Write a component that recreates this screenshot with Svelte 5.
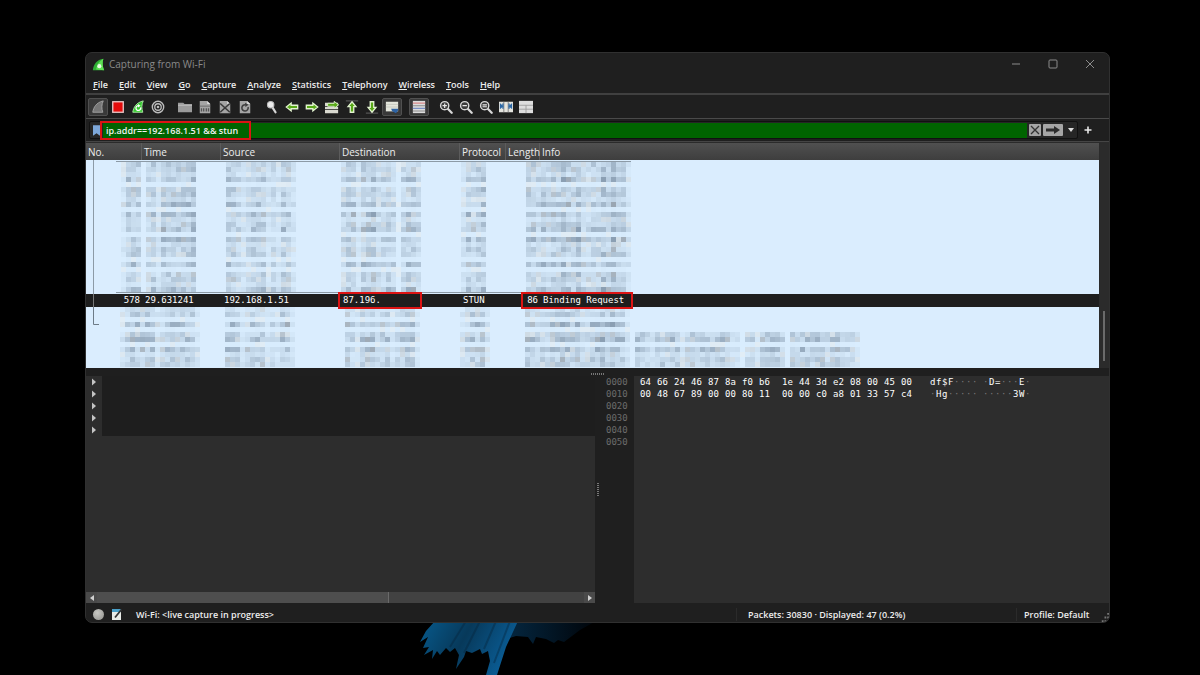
<script lang="ts">
  type Block = { x: number; mask: string };

  const menus = ['File', 'Edit', 'View', 'Go', 'Capture', 'Analyze', 'Statistics', 'Telephony', 'Wireless', 'Tools', 'Help'];

  const toolGroups = [
    ['start', 'stop', 'restart', 'options'],
    ['open', 'save', 'close', 'reload'],
    ['find', 'back', 'forward', 'goto', 'first', 'last', 'autoscroll'],
    ['colorize'],
    ['zoomin', 'zoomout', 'zoomreset', 'resize', 'layout']
  ];
  const pressed = ['start', 'autoscroll', 'colorize'];

  const columns = ['No.', 'Time', 'Source', 'Destination', 'Protocol', 'Length', 'Info'];

  const offsets = ['0000', '0010', '0020', '0030', '0040', '0050'];
  const hexRows = [
    { bytes: ['64 66 24 46 87 8a f0 b6', '1e 44 3d e2 08 00 45 00'], ascii: ['df$F····', '·D=···E·'] },
    { bytes: ['00 48 67 89 00 00 80 11', '00 00 c0 a8 01 33 57 c4'], ascii: ['·Hg·····', '·····3W·'] }
  ];

  // hidden packets: one digit per 5px tile, the mask runs along x and the rows along y
  const upperRows = '22130221303123031220302213';
  const lowerRows = '120302303122';
  const upperBlocks: Block[] = [
    { x: 35, mask: '1333' },
    { x: 60, mask: '2313333334' },
    { x: 140, mask: '33212333121331' },
    { x: 255, mask: '2331334223202332' },
    { x: 375, mask: '13234' },
    { x: 440, mask: '332323343342233434331' }
  ];
  const lowerBlocks: Block[] = [
    { x: 34, mask: '12333' },
    { x: 59, mask: '33123333331' },
    { x: 139, mask: '33312333121331' },
    { x: 259, mask: '321333233123331' },
    { x: 374, mask: '123331' },
    { x: 439, mask: '332323343342233434331' }
  ];
  const longBlocks: Block[] = [{ x: 549, mask: '332133233133333333311022133332033333332332221' }];

  function noise(a: number, b: number): number {
    const n = Math.sin(a * 12.9898 + b * 78.233) * 43758.5453;
    return n - Math.floor(n);
  }

  function tiles(blocks: Block[], rows: string, top = 0) {
    const out: { x: number; y: number; fill: string }[] = [];
    for (const block of blocks) {
      [...rows].forEach((row, r) => {
        [...block.mask].forEach((cell, c) => {
          const n = noise(block.x / 5 + c, r + top);
          const t = Math.min(0.85, (Number(cell) / 4) * (0.04 + Number(row) / 3.6) * (0.25 + n * 0.85));
          const warm = noise(c + 3, r + block.x) > 0.85 ? 8 : 0;
          const red = Math.round(217 - t * 92 + warm);
          const green = Math.round(237 - t * 92);
          const blue = Math.round(254 - t * 88 - warm);
          out.push({ x: block.x + c * 5, y: top + r * 5, fill: `rgb(${red}, ${green}, ${blue})` });
        });
      });
    }
    return out;
  }

  const upperTiles = tiles(upperBlocks, upperRows);
  const lowerTiles = [...tiles(lowerBlocks, lowerRows), ...tiles(longBlocks, '2303122', 25)];

  let filter = $state('ip.addr==192.168.1.51 && stun');
</script>

{#snippet fin(color: string, edge: string)}
  <path d="M2 14 C3 8 6 3 14 1 C12 5 12 10 13.500 14 Z" fill={color} stroke={edge} stroke-width="1" />
{/snippet}

{#snippet lens(sign: string)}
  <path d="M9.500 9.500 L14.500 14.500" stroke="#d8d8d8" stroke-width="2.600" stroke-linecap="round" />
  <circle cx="6.500" cy="6.500" r="4.700" fill="#3c3c3c" stroke="#d8d8d8" stroke-width="1.600" />
  <path d={sign} stroke="#e8e8e8" stroke-width="1.400" />
{/snippet}

{#snippet page()}
  <path d="M2 1 H10.500 L14 4.500 V15 H2 Z" fill="#a5a5a5" />
  <path d="M10.500 1 V4.500 H14 Z" fill="#dedede" />
{/snippet}

{#snippet icon(name: string)}
  <svg class="icon" viewBox="0 0 16 16" fill="none" aria-hidden="true">
    {#if name === 'start'}
      {@render fin('#777', '#a8a8a8')}
    {:else if name === 'stop'}
      <rect x="2" y="2" width="12" height="12" fill="#e30b0b" stroke="#e9c9c9" stroke-width="1.500" />
    {:else if name === 'restart'}
      {@render fin('#35c82f', '#b4f0ac')}
      <path d="M11 8.500 A2.700 2.700 0 1 1 8.500 6.500" stroke="#fff" stroke-width="1.500" />
      <path d="M8 4.500 L11 6.500 L8 8.500 Z" fill="#fff" />
    {:else if name === 'options'}
      <circle cx="8" cy="8" r="6.500" stroke="#bcbcbc" stroke-width="1.600" />
      <circle cx="8" cy="8" r="3.700" stroke="#bcbcbc" stroke-width="1.500" />
      <circle cx="8" cy="8" r="1.500" fill="#bcbcbc" />
    {:else if name === 'open'}
      <path d="M0 3 H6 L7.500 4.500 H16 V14 H0 Z" fill="#9b9b9b" />
      <path d="M0 6 H16" stroke="#c2c2c2" />
    {:else if name === 'save'}
      {@render page()}
      <path d="M2 7 H14" stroke="#666" />
      <path d="M4 9.500 V13 M6.500 9.500 V13 M9.500 9.500 V13 M12 9.500 V13" stroke="#555" stroke-width="1.500" />
    {:else if name === 'close'}
      {@render page()}
      <path d="M2.500 4 L13.500 14 M13.500 4 L2.500 14" stroke="#3a3a3a" stroke-width="1.800" />
    {:else if name === 'reload'}
      {@render page()}
      <path d="M11.500 8 A3.600 3.600 0 1 1 9 5.500" stroke="#3f3f3f" stroke-width="1.800" />
      <path d="M8 3 L12 5.500 L8.500 8 Z" fill="#3f3f3f" />
    {:else if name === 'find'}
      <path d="M8.500 8.500 L12 14" stroke="#d5d5d5" stroke-width="2.600" stroke-linecap="round" />
      <circle cx="6.500" cy="5.500" r="3.700" fill="#ececec" stroke="#bbb" stroke-width="1.200" />
    {:else if name === 'back'}
      <path d="M1.500 8 L7 3.500 V6 H14.500 V10 H7 V12.500 Z" fill="#58a817" stroke="#e2f3cf" stroke-width="1.500" />
    {:else if name === 'forward'}
      <path d="M14.500 8 L9 3.500 V6 H1.500 V10 H9 V12.500 Z" fill="#58a817" stroke="#e2f3cf" stroke-width="1.500" />
    {:else if name === 'goto'}
      <path d="M0 3 H15 V7 H0 Z M0 8 H15 V10.500 H0 Z M0 11.500 H15 V15 H0 Z" fill="#d9d9d0" />
      <path d="M15.500 5.500 L10.500 1.500 V3.800 H3 V7.200 H10.500 V9.500 Z" fill="#58a817" stroke="#e2f3cf" />
    {:else if name === 'first'}
      <path d="M1 1 H15" stroke="#555" stroke-width="1.200" />
      <path d="M8 2 L12.500 7.500 H10 V14 H6 V7.500 H3.500 Z" fill="#58a817" stroke="#e2f3cf" stroke-width="1.500" />
    {:else if name === 'last'}
      <path d="M1 15 H15" stroke="#555" stroke-width="1.200" />
      <path d="M8 14 L12.500 8.500 H10 V2 H6 V8.500 H3.500 Z" fill="#58a817" stroke="#e2f3cf" stroke-width="1.500" />
    {:else if name === 'autoscroll'}
      <rect x="1" y="2" width="14" height="11" fill="#e4e6dc" />
      <path d="M1 5 H15 M1 8 H15" stroke="#c3c6be" />
      <path d="M7 10 H15 V12 L12.500 15 L8 12.500 Z" fill="#2e63a3" />
    {:else if name === 'colorize'}
      <rect x="1" y="1" width="14" height="14" fill="#dcdcdc" />
      <path d="M1 3.500 H15" stroke="#d98a8a" stroke-width="1.400" />
      <path d="M1 6.500 H15 M1 12.500 H15" stroke="#8c8c8c" stroke-width="1.200" />
      <path d="M1 9.500 H15" stroke="#7a90c4" stroke-width="1.400" />
    {:else if name === 'zoomin'}
      {@render lens('M4 6.500 H9 M6.500 4 V9')}
    {:else if name === 'zoomout'}
      {@render lens('M4 6.500 H9')}
    {:else if name === 'zoomreset'}
      {@render lens('M4 5.500 H9 M4 7.700 H9')}
    {:else if name === 'resize'}
      <rect x="0" y="2" width="16" height="12" fill="#e4e4de" />
      <path d="M5.500 2 V14 M10.500 2 V14" stroke="#777" />
      <path d="M1 3.500 L5 7 L1 10.500 Z M15 3.500 L11 7 L15 10.500 Z" fill="#2b67a5" />
      <path d="M4.500 4 V10 M11.500 4 V10" stroke="#2b67a5" stroke-width="1.500" />
    {:else if name === 'layout'}
      <rect x="0" y="1" width="16" height="14" fill="#dedede" />
      <path d="M0 6 H16 M0 10.500 H16 M8 6 V15" stroke="#9c9c9c" />
    {/if}
  </svg>
{/snippet}

<div class="desktop">
  <svg class="wallpaper" viewBox="0 0 200 54" aria-hidden="true">
    <defs>
      <linearGradient id="petal" x1="0" y1="0" x2="1" y2="0.300">
        <stop offset="0" stop-color="#075a8c" />
        <stop offset="0.500" stop-color="#07395a" />
        <stop offset="1" stop-color="#0a5c94" />
      </linearGradient>
      <linearGradient id="shade" x1="0" y1="0" x2="1" y2="0">
        <stop offset="0" stop-color="#052a45" />
        <stop offset="1" stop-color="#000409" />
      </linearGradient>
    </defs>
    <path d="M84 0 H176 L160 9 L144 21 L138 19 L134 22 L126 18 L116 16 L113 23 L108 16 L96 15 L80 20 Z" fill="url(#shade)" />
    <path d="M15 0 H98 L86 26 L77 54 H66 L70 40 L68 30 L62 33 L60 28 L52 32 L46 30 L44 36 L36 48 L39 34 L35 27 L30 31 L26 27 L20 34 L17 30 L12 38 L13 29 L4 34 L9 26 L3 27 L8 16 L0 21 L6 10 Z" fill="url(#petal)" />
    <path d="M60 0 L44 32 M76 0 L64 28 M46 0 L30 26 M90 0 L74 42" stroke="#06253c" stroke-width="2" opacity="0.400" />
  </svg>

  <main class="window">
    <header class="titlebar">
      <svg class="logo" viewBox="0 0 16 16" aria-hidden="true">
        <path d="M1 15 C2 8 6 2 14 1 C12.500 5 13 11 15 15 Z" fill="#2fae35" />
        <path d="M5 14 C6 8 9 4 14 1 C12.500 5 13 11 15 15 Z" fill="#5fdf55" />
        <circle cx="9" cy="10" r="2.500" fill="#eafbe6" />
      </svg>
      <h1>Capturing from Wi-Fi</h1>
      <div class="controls">
        <button aria-label="Minimize"><svg viewBox="0 0 10 10"><path d="M1 5 H9" /></svg></button>
        <button aria-label="Maximize"><svg viewBox="0 0 10 10"><rect x="1" y="1" width="8" height="8" rx="1" /></svg></button>
        <button aria-label="Close"><svg viewBox="0 0 10 10"><path d="M1 1 L9 9 M9 1 L1 9" /></svg></button>
      </div>
    </header>

    <nav class="menubar">
      {#each menus as menu}
        <button><u>{menu[0]}</u>{menu.slice(1)}</button>
      {/each}
    </nav>

    <div class="toolbar">
      {#each toolGroups as group}
        <div class="tool-group">
          {#each group as tool}
            <button class="tool" class:pressed={pressed.includes(tool)} aria-label={tool}>
              {@render icon(tool)}
            </button>
          {/each}
        </div>
      {/each}
    </div>

    <div class="filterbar">
      <div class="filter-box">
        <button class="bookmark" aria-label="Filter bookmarks">
          <svg viewBox="0 0 8 12"><path d="M0 0 H8 V12 L4 9 L0 12 Z" fill="#7da7d9" /></svg>
        </button>
        <div class="filter-field">
          <input type="text" aria-label="Display filter" spellcheck="false" bind:value={filter} />
          <span class="mark filter-mark"></span>
        </div>
        <button class="clear" aria-label="Clear filter">
          <svg viewBox="0 0 12 12"><path d="M2 2 L10 10 M10 2 L2 10" stroke="#333" stroke-width="1.300" /></svg>
        </button>
        <button class="apply" aria-label="Apply filter">
          <svg viewBox="0 0 20 12"><path d="M3 4.500 H11 V2 L17 6 L11 10 V7.500 H3 Z" fill="#2c2c2c" /></svg>
        </button>
        <button class="recent" aria-label="Recent filters">
          <svg viewBox="0 0 12 12"><path d="M3 4 H9 L6 8 Z" fill="#ddd" /></svg>
        </button>
      </div>
      <button class="add" aria-label="Add filter button">
        <svg viewBox="0 0 8 8"><path d="M4 0.500 V7.500 M0.500 4 H7.500" stroke="#e8e8e8" stroke-width="1.600" /></svg>
      </button>
    </div>

    <section class="packets">
      <table>
        <colgroup>
          <col class="c-no" /><col class="c-time" /><col class="c-src" /><col class="c-dst" /><col class="c-proto" /><col class="c-len" /><col />
        </colgroup>
        <thead>
          <tr>
            {#each columns as column}
              <th>{column}</th>
            {/each}
          </tr>
        </thead>
        <tbody>
          <tr>
            <td class="hidden-rows" colspan="7">
              <svg class="upper" aria-hidden="true">
                {#each upperTiles as tile}
                  <rect x={tile.x} y={tile.y + 2} width="5" height="5" fill={tile.fill} />
                {/each}
                <path d="M7.500 0 V134" stroke="#8c9aa6" />
                <path d="M30 1.500 H545 M30 132.500 H545" stroke="#8c9aa6" />
              </svg>
            </td>
          </tr>
          <tr class="selected">
            <td class="num link">578</td>
            <td>29.631241</td>
            <td>192.168.1.51</td>
            <td class="marked">87.196.<span class="mark dst-mark"></span></td>
            <td>STUN</td>
            <td class="num marked">86<span class="mark info-mark"></span></td>
            <td>Binding Request</td>
          </tr>
          <tr>
            <td class="hidden-rows" colspan="7">
              <svg class="lower" aria-hidden="true">
                {#each lowerTiles as tile}
                  <rect x={tile.x} y={tile.y} width="5" height="5" fill={tile.fill} />
                {/each}
                <path d="M7.500 0 V17.500 H13" fill="none" stroke="#6d7b87" />
              </svg>
            </td>
          </tr>
        </tbody>
      </table>
      <div class="vscroll"><div class="vthumb"></div></div>
    </section>

    <div class="splitter"><span class="grip"></span></div>

    <div class="panes">
      <section class="details">
        <div class="tree">
          <div class="arrows">
            {#each [1, 2, 3, 4, 5] as layer}
              <button aria-label="Expand layer {layer}">
                <svg viewBox="0 0 6 8"><path d="M1 0.500 L5 4 L1 7.500 Z" fill="#c4c4c4" /></svg>
              </button>
            {/each}
          </div>
          <div class="redacted"></div>
        </div>
        <div class="hscroll">
          <button aria-label="Scroll left"><svg viewBox="0 0 6 8"><path d="M5 1 L1 4 L5 7 Z" fill="#d0d0d0" /></svg></button>
          <div class="track"><div class="hthumb"></div></div>
          <button aria-label="Scroll right"><svg viewBox="0 0 6 8"><path d="M1 1 L5 4 L1 7 Z" fill="#d0d0d0" /></svg></button>
        </div>
      </section>

      <div class="vsplitter"><span class="vgrip"></span></div>

      <section class="bytes">
        <div class="offsets">
          {#each offsets as offset}
            <div>{offset}</div>
          {/each}
        </div>
        <div class="dump">
          {#each hexRows as row}
            <div class="dump-row">
              {#each row.bytes as half}
                <div class="hex">
                  {#each half.split(' ') as byte}<span>{byte}</span>{/each}
                </div>
              {/each}
              <div class="ascii">
                {#each row.ascii as half}
                  <div class="chars">
                    {#each half as char}<span class:dim={char === '·'}>{char}</span>{/each}
                  </div>
                {/each}
              </div>
            </div>
          {/each}
        </div>
      </section>
    </div>

    <footer class="statusbar">
      <button class="expert" aria-label="Expert information"></button>
      <button class="notes" aria-label="Capture file comments">
        <svg viewBox="0 0 11 12">
          <rect x="0" y="1" width="9" height="11" fill="#e8ece8" />
          <path d="M0 1 H9 V4 H0 Z" fill="#4aa0c8" />
          <path d="M3 9.500 L9.500 1.500" stroke="#333" stroke-width="1.800" />
        </svg>
      </button>
      <span class="source">Wi-Fi: &lt;live capture in progress&gt;</span>
      <span class="counts">Packets: 30830 · Displayed: 47 (0.2%)</span>
      <span class="profile">Profile: Default</span>
      <svg class="resize-grip" viewBox="0 0 10 10" aria-hidden="true">
        <path d="M8 0 h2 v2 h-2 Z M8 4 h2 v2 h-2 Z M8 8 h2 v2 h-2 Z M5 4 h2 v2 h-2 Z M5 8 h2 v2 h-2 Z M2 8 h2 v2 h-2 Z" fill="#777" />
      </svg>
    </footer>
  </main>
</div>

<style>
  :global(body) {
    background: #000;
  }

  .desktop {
    position: relative;
    box-sizing: border-box;
    display: flex;
    min-height: 100vh;
    padding: 52px 90px 52px 85px;
    background: #000;
    font-family: 'Open Sans', 'Noto Sans', sans-serif;
    font-size: 9px;
    font-weight: 600;
    color: #ededed;
  }

  .wallpaper {
    position: absolute;
    left: 35%;
    bottom: 0;
    width: 200px;
    height: 54px;
  }

  .window {
    position: relative;
    flex: 1;
    min-width: 0;
    display: flex;
    flex-direction: column;
    box-sizing: border-box;
    border: 1px solid #303030;
    border-radius: 7px;
    background: #1f1f1f;
    overflow: hidden;
  }

  button {
    display: flex;
    align-items: center;
    justify-content: center;
    padding: 0;
    border: 0;
    background: none;
    color: inherit;
    font: inherit;
  }

  .titlebar {
    display: flex;
    align-items: center;
    height: 22px;
    padding: 0 9px 0 6px;
    gap: 4px;
  }

  .logo {
    width: 13px;
    height: 13px;
  }

  h1 {
    flex: 1;
    margin: 0;
    font-size: 10px;
    font-weight: 400;
    color: #8a8a8a;
  }

  .controls {
    display: flex;
    gap: 17px;
  }

  .controls button {
    width: 20px;
    height: 20px;
  }

  .controls svg {
    width: 10px;
    height: 10px;
    fill: none;
    stroke: #8c8c8c;
  }

  .menubar {
    display: flex;
    align-items: flex-end;
    gap: 11px;
    height: 16px;
    padding: 0 7px 2px;
    border-bottom: 2px solid #404040;
  }

  .menubar u {
    text-underline-offset: 1px;
  }

  .toolbar {
    display: flex;
    align-items: center;
    gap: 7px;
    height: 23px;
    padding: 0 2px;
    border-bottom: 1px solid #4a4a4a;
  }

  .tool-group {
    display: flex;
  }

  .tool {
    box-sizing: border-box;
    width: 20px;
    height: 18px;
    border: 1px solid transparent;
    border-radius: 2px;
  }

  .tool.pressed {
    background: #393939;
    border-color: #505050;
  }

  .icon {
    width: 14px;
    height: 14px;
  }

  .filterbar {
    display: flex;
    align-items: center;
    gap: 5px;
    height: 22px;
    padding: 0 16px 0 3px;
    border-bottom: 1px solid #454545;
  }

  .filter-box {
    flex: 1;
    min-width: 0;
    display: flex;
    align-items: center;
    gap: 1px;
    height: 16px;
    border: 1px solid #111;
    border-radius: 2px;
    background: #262626;
  }

  .bookmark {
    width: 12px;
    height: 12px;
  }

  .bookmark svg {
    width: 7px;
    height: 11px;
  }

  .filter-field {
    position: relative;
    flex: 1;
    min-width: 0;
    display: flex;
  }

  .filter-field input {
    flex: 1;
    min-width: 0;
    height: 15px;
    padding: 0 3px;
    border: 0;
    outline: 0;
    background: #006400;
    color: #f2f2f2;
    font: inherit;
  }

  .mark {
    position: absolute;
    box-sizing: border-box;
    border: 2px solid #dc1414;
    pointer-events: none;
  }

  .filter-mark {
    left: -3px;
    top: -2px;
    width: 151px;
    height: 19px;
  }

  .clear,
  .apply {
    height: 12px;
    border-radius: 1px;
    background: #a5a5a5;
  }

  .clear {
    width: 12px;
    margin: 0 1px;
  }

  .clear svg,
  .recent svg {
    width: 12px;
    height: 12px;
  }

  .apply {
    width: 20px;
  }

  .apply svg {
    width: 20px;
    height: 12px;
  }

  .recent {
    width: 13px;
  }

  .add {
    width: 10px;
  }

  .add svg {
    width: 8px;
    height: 8px;
  }

  .packets {
    display: flex;
    padding-top: 1px;
    background: #2b2b2b;
  }

  table {
    flex: 1;
    min-width: 0;
    width: 100%;
    table-layout: fixed;
    border-collapse: collapse;
    background: #daedfe;
    font-family: 'DejaVu Sans Mono', monospace;
    font-weight: 400;
  }

  .c-no {
    width: 56px;
  }

  .c-time {
    width: 79px;
  }

  .c-src {
    width: 119px;
  }

  .c-dst {
    width: 120px;
  }

  .c-proto {
    width: 46px;
  }

  .c-len {
    width: 34px;
  }

  th {
    height: 17px;
    padding: 0 2px;
    background: linear-gradient(#505050, #3e3e3e);
    box-shadow: inset -1px 0 #5c5c5c;
    font-family: 'Open Sans', 'Noto Sans', sans-serif;
    font-size: 10px;
    font-weight: 500;
    line-height: 16px;
    text-align: left;
    white-space: nowrap;
  }

  th:last-child {
    box-shadow: none;
  }

  td {
    padding: 0 3px;
    white-space: nowrap;
  }

  .hidden-rows {
    padding: 0;
  }

  .hidden-rows svg {
    display: block;
    width: 100%;
  }

  .upper {
    height: 134px;
  }

  .lower {
    height: 61px;
  }

  .selected td {
    height: 13px;
    background: #1e1e1e;
    color: #fff;
    line-height: 13px;
  }

  .selected .num {
    padding-right: 2px;
    text-align: right;
  }

  .selected .link {
    background: linear-gradient(#777, #777) 7px 0 / 1px 100% no-repeat #1e1e1e;
  }

  .marked {
    position: relative;
  }

  .dst-mark {
    left: -2px;
    top: -2px;
    width: 84px;
    height: 17px;
  }

  .info-mark {
    left: 15px;
    top: -2px;
    width: 112px;
    height: 17px;
    z-index: 1;
  }

  .vscroll {
    display: flex;
    flex-direction: column;
    justify-content: flex-end;
    align-items: center;
    width: 10px;
    padding-bottom: 7px;
  }

  .vthumb {
    width: 2px;
    height: 50px;
    background: #6a6a6a;
  }

  .splitter {
    display: flex;
    align-items: flex-end;
    justify-content: center;
    height: 8px;
    padding-bottom: 1px;
    box-sizing: border-box;
  }

  .grip {
    width: 14px;
    height: 2px;
    background: repeating-linear-gradient(90deg, #777 0 1px, transparent 1px 2px);
  }

  .panes {
    flex: 1;
    display: grid;
    grid-template-columns: 509px 5px 1fr;
    min-height: 120px;
  }

  .details {
    display: flex;
    flex-direction: column;
    background: #2d2d2d;
  }

  .tree {
    flex: 1;
    display: flex;
    align-items: flex-start;
  }

  .arrows {
    width: 16px;
  }

  .arrows button {
    width: 16px;
    height: 12px;
  }

  .arrows svg,
  .hscroll svg {
    width: 6px;
    height: 8px;
  }

  .redacted {
    flex: 1;
    height: 60px;
    background: #1e1e1e;
  }

  .hscroll {
    display: flex;
    height: 11px;
  }

  .hscroll button {
    width: 11px;
    background: #4a4a4a;
  }

  .track {
    flex: 1;
    background: #424242;
  }

  .hthumb {
    box-sizing: border-box;
    width: 60%;
    height: 100%;
    background: #4e4e4e;
    border-right: 1px solid #6a6a6a;
  }

  .vsplitter {
    display: flex;
    align-items: center;
    justify-content: center;
  }

  .vgrip {
    width: 2px;
    height: 14px;
    background: repeating-linear-gradient(#777 0 1px, transparent 1px 2px);
  }

  .bytes {
    display: flex;
    font-family: 'DejaVu Sans Mono', monospace;
    font-weight: 400;
    line-height: 12px;
    color: #fff;
  }

  .offsets {
    width: 34px;
    box-sizing: border-box;
    padding-left: 6px;
    color: #6c6c6c;
  }

  .dump {
    flex: 1;
    padding-left: 6px;
    background: #2d2d2d;
  }

  .dump-row {
    display: flex;
    gap: 6px;
  }

  .hex {
    display: grid;
    grid-template-columns: repeat(8, 17px);
  }

  .ascii {
    display: flex;
    gap: 5px;
    padding-left: 6px;
  }

  .chars {
    display: grid;
    grid-template-columns: repeat(8, 6px);
  }

  .dim {
    color: #777;
  }

  .statusbar {
    display: flex;
    align-items: center;
    box-sizing: border-box;
    height: 19px;
    padding: 3px 0 0 7px;
    white-space: nowrap;
  }

  .expert {
    width: 11px;
    height: 11px;
    margin-right: 8px;
    border-radius: 50%;
    background: radial-gradient(circle at 40% 35%, #c9c9c4, #90908c);
  }

  .notes {
    margin-right: 13px;
  }

  .notes svg {
    width: 11px;
    height: 12px;
  }

  .source {
    flex: 1;
  }

  .counts {
    width: 268px;
    padding-left: 11px;
    border-left: 1px solid #2b2b2b;
  }

  .profile {
    width: 76px;
    padding-left: 7px;
    border-left: 1px solid #2b2b2b;
  }

  .resize-grip {
    align-self: flex-end;
    width: 9px;
    height: 9px;
  }
</style>
